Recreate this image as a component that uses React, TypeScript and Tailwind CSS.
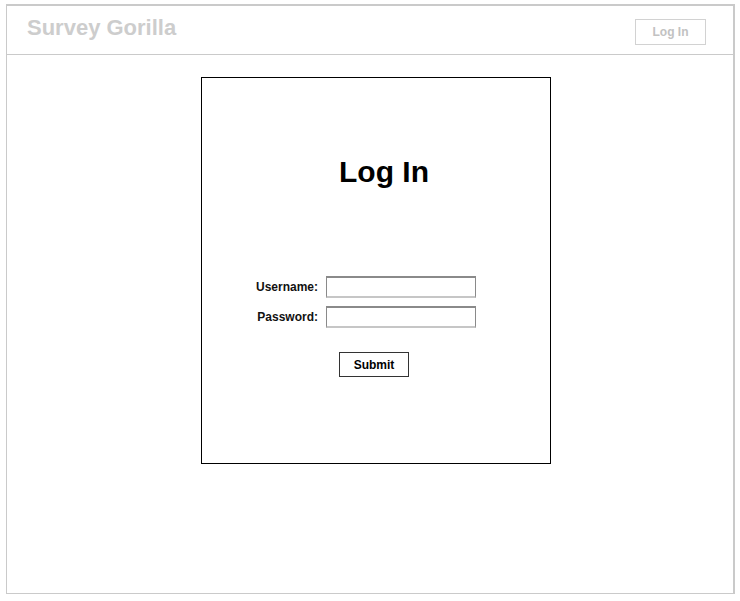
export default function App() {
  return (
    <div className="min-h-[601px] w-[740px] bg-white pt-[4px] pl-[6px] font-['Liberation_Sans',Arial,sans-serif]">
      <div className="flex h-[590px] w-[729px] flex-col border border-t-2 border-r-2 border-[#cacaca]">
        <header className="flex h-[49px] shrink-0 items-start justify-between border-b border-[#cacaca] pl-[20px] pr-[27px]">
          <div className="mt-[9px] text-[22px] leading-[26px] font-bold text-[#cdcdcd]">Survey Gorilla</div>
          <button className="mt-[13px] h-[26px] w-[71px] border border-[#d2d2d2] text-[12px] font-bold text-[#c2c2c2]">
            Log In
          </button>
        </header>
        <main className="flex-1">
          <div className="mt-[22px] ml-[194px] flex h-[387px] w-[350px] flex-col border border-black">
            <h1 className="mt-[77px] pl-[137px] text-[30px] leading-[34px] font-bold text-black">Log In</h1>
            <form className="mt-[87px] flex flex-col items-start pl-[54px]" onSubmit={(e) => e.preventDefault()}>
              <div className="flex items-center gap-[8px]">
                <label className="w-[62px] text-right text-[12px] font-bold text-[#111]">Username:</label>
                <input className="h-[22px] w-[150px] border border-t-2 border-[#8a8a8a] border-b-2 border-b-[#c6c6c6] outline-none" />
              </div>
              <div className="mt-[8px] flex items-center gap-[8px]">
                <label className="w-[62px] text-right text-[12px] font-bold text-[#111]">Password:</label>
                <input type="password" className="h-[22px] w-[150px] border border-t-2 border-[#8a8a8a] border-b-2 border-b-[#c6c6c6] outline-none" />
              </div>
              <button className="mt-[24px] ml-[83px] h-[25px] w-[70px] border border-[#333] text-[12px] font-bold text-black">
                Submit
              </button>
            </form>
          </div>
        </main>
      </div>
    </div>
  );
}
